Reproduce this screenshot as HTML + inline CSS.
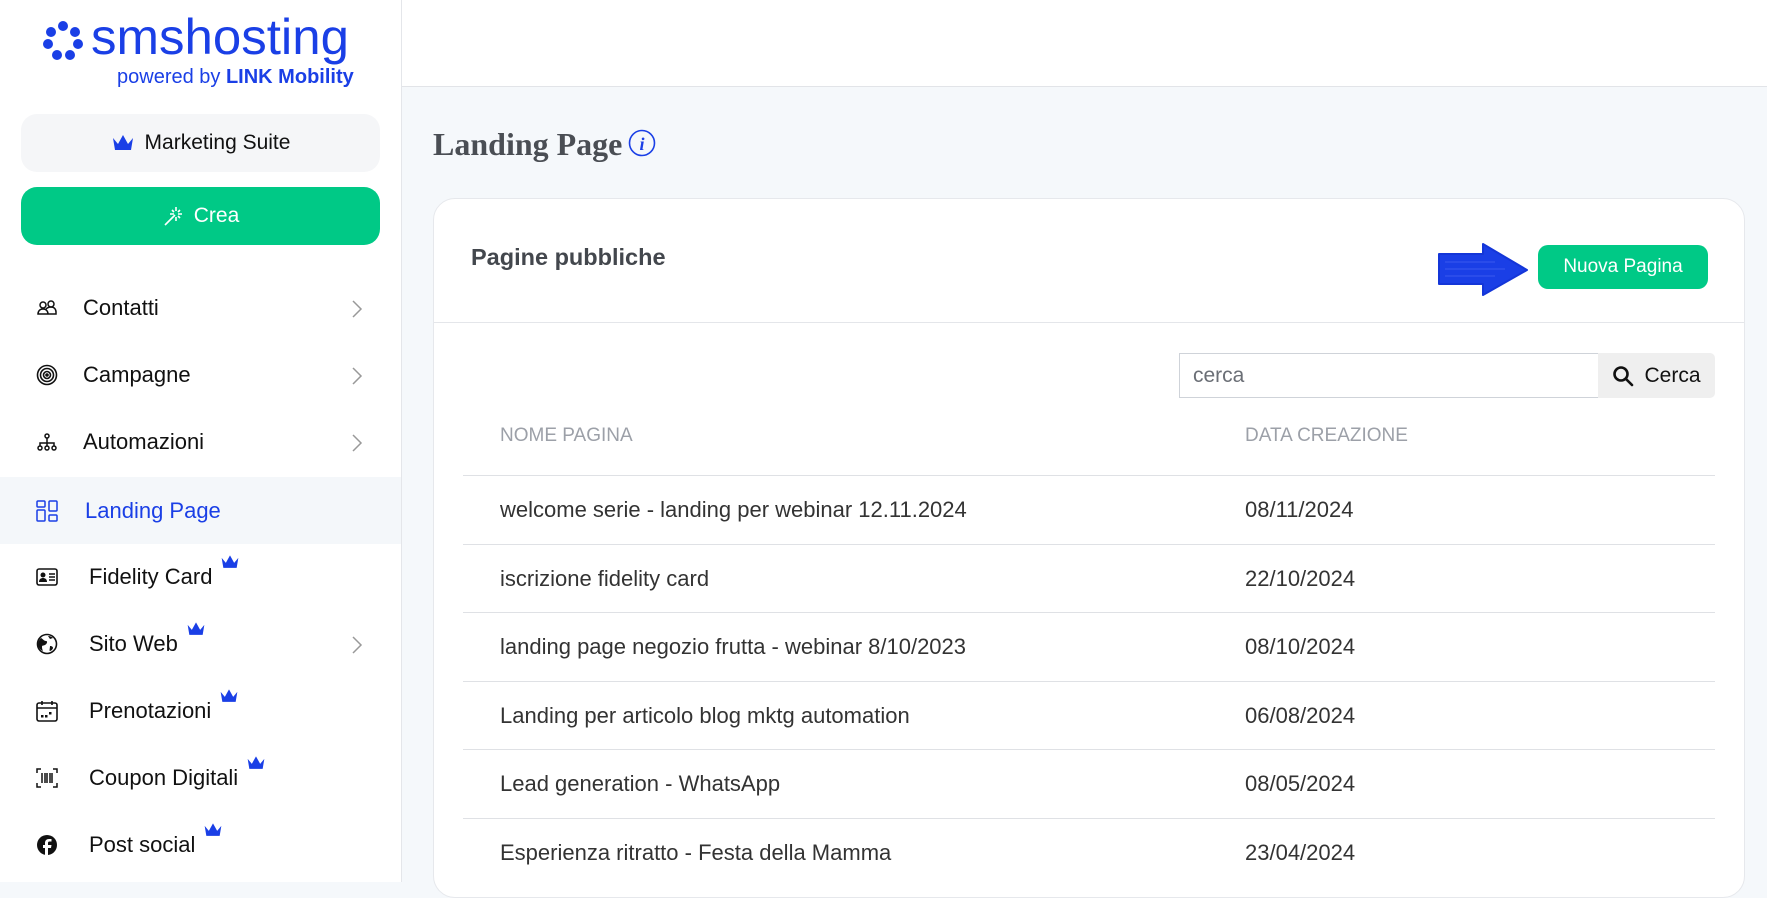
<!DOCTYPE html>
<html><head><meta charset="utf-8"><style>
*{box-sizing:border-box;margin:0;padding:0}
body{width:1767px;height:882px;overflow:hidden;background:#f5f8fb;font-family:"Liberation Sans",Arial,sans-serif;position:relative}
.side{position:absolute;left:0;top:0;width:402px;height:882px;background:#fff;border-right:1px solid #e4e6ea}
.top{position:absolute;left:402px;top:0;right:0;height:87px;background:#fff;border-bottom:1px solid #e2e4e8}
.abs{position:absolute}
.logo{left:91px;top:8px;font-size:50px;color:#1a3fe6;transform:scaleX(1.02);transform-origin:left}
.pow{left:117px;top:66px;font-size:20px;color:#1a3fe6}
.ms{left:21px;top:114px;width:359px;height:58px;background:#f5f6f8;border-radius:16px;font-size:21px;color:#111;display:flex;align-items:center;justify-content:center;gap:10px}
.crea{left:21px;top:187px;width:359px;height:58px;background:#00c986;border-radius:16px;font-size:21px;color:#fff;display:flex;align-items:center;justify-content:center;gap:10px}
.item{position:absolute;left:0;width:401px;height:66px;display:flex;align-items:center;font-size:22px;color:#111}
.item .ic{position:absolute;left:36px;top:22px;width:22px;height:22px}
.item .t{position:absolute;left:83px}
.item .t2{position:absolute;left:89px}
.chev{position:absolute;left:350px;top:24px}
.crown{display:inline-block;vertical-align:top;margin-left:8px;margin-top:-10px}
.card{left:433px;top:198px;width:1312px;height:700px;background:#fff;border:1px solid #e6e8ec;border-radius:22px}
.row{position:absolute;left:463px;width:1252px;height:68px;border-top:1px solid #dfe1e5;font-size:22px;color:#333;display:flex;align-items:center}
.row span{position:absolute}
</style></head><body>
<div class="side">
<svg class="abs" style="left:40px;top:18px" width="50" height="45" viewBox="40 18 50 45">
<g fill="#1a3fe6"><circle cx="63" cy="26" r="5"/><circle cx="75" cy="32" r="5"/><circle cx="78" cy="44" r="5"/><circle cx="70" cy="55" r="5"/><circle cx="57" cy="55" r="5"/><circle cx="48" cy="44" r="5"/><circle cx="51" cy="32" r="5"/></g></svg>
<div class="abs logo">smshosting</div>
<div class="abs pow">powered by <b>LINK Mobility</b></div>
<div class="abs ms"><svg width="24" height="18" viewBox="0 0 24 18"><path d="M2 4l5 6 5-9 5 9 5-6-2 12H4z" fill="#1a3fe6"/></svg>Marketing Suite</div>
<div class="abs crea"><svg width="22" height="22" viewBox="0 0 22 22" stroke="#fff" stroke-width="1.6" fill="none"><path d="M3 20L13 10M14 2v4M14 12v4M8 9h4M16 9h4M10 5l2 2M18 13l-2-2M18 5l-2 2"/></svg>Crea</div>

<div class="item" style="top:275px"><svg class="ic" viewBox="0 0 22 22" fill="none" stroke="#111" stroke-width="1.5"><circle cx="7" cy="8" r="3"/><circle cx="15" cy="7" r="3"/><path d="M2 17c0-3 2-5 5-5s5 2 5 5zM10 12c1-1 3-2 5-2 3 0 5 2 5 5v2h-8"/></svg><span class="t">Contatti</span><svg class="chev" width="14" height="20" viewBox="0 0 14 20"><path d="M3 2l8 8-8 8" stroke="#999" stroke-width="1.5" fill="none"/></svg></div>
<div class="item" style="top:342px"><svg class="ic" viewBox="0 0 22 22" fill="none" stroke="#111" stroke-width="1.6"><circle cx="11" cy="11" r="9.5"/><circle cx="11" cy="11" r="6.5"/><circle cx="11" cy="11" r="3.5"/><circle cx="11" cy="11" r="1" fill="#111"/></svg><span class="t">Campagne</span><svg class="chev" width="14" height="20" viewBox="0 0 14 20"><path d="M3 2l8 8-8 8" stroke="#999" stroke-width="1.5" fill="none"/></svg></div>
<div class="item" style="top:409px"><svg class="ic" viewBox="0 0 22 22" fill="none" stroke="#111" stroke-width="1.5"><circle cx="11" cy="5" r="2"/><path d="M11 7v4M4 15v-3h14v3M11 11v4"/><circle cx="4" cy="17" r="2"/><circle cx="11" cy="17" r="2"/><circle cx="18" cy="17" r="2"/></svg><span class="t">Automazioni</span><svg class="chev" width="14" height="20" viewBox="0 0 14 20"><path d="M3 2l8 8-8 8" stroke="#999" stroke-width="1.5" fill="none"/></svg></div>
<div class="item" style="top:477px;height:67px;background:#f4f7fa;color:#1a3fe6"><svg class="ic" style="top:23px" viewBox="0 0 22 22" fill="none" stroke="#1a3fe6" stroke-width="1.5"><rect x="1" y="1" width="8" height="6" rx="1"/><rect x="13" y="1" width="8" height="10" rx="1"/><rect x="1" y="10" width="8" height="11" rx="1"/><rect x="13" y="15" width="8" height="6" rx="1"/></svg><span class="t" style="left:85px">Landing Page</span></div>
<div class="item" style="top:544px"><svg class="ic" viewBox="0 0 22 22"><rect x="1" y="3" width="20" height="16" rx="2" fill="none" stroke="#111" stroke-width="1.6"/><circle cx="7" cy="9" r="2.5" fill="#111"/><path d="M3 16c0-3 2-4 4-4s4 1 4 4z" fill="#111"/><path d="M13 8h6M13 11h6M13 14h6" stroke="#111" stroke-width="1.5"/></svg><span class="t2">Fidelity Card<svg class="crown" width="20" height="16" viewBox="0 0 24 18"><path d="M2 4l5 6 5-9 5 9 5-6-2 12H4z" fill="#1a3fe6"/></svg></span></div>
<div class="item" style="top:611px"><svg class="ic" viewBox="0 0 22 22"><circle cx="11" cy="11" r="9.5" fill="none" stroke="#111" stroke-width="1.6"/><path d="M5 5c2 1 3 3 5 3s1 3-1 4-3 0-3 2 1 4 1 4c-3-1-5-4-5-7 0-2 1-4 3-6zM14 13c2 0 3 1 3 2s-2 3-3 3 0-3 0-5zM12 3c2 0 4 1 5 2l-3 1z" fill="#111"/></svg><span class="t2">Sito Web<svg class="crown" width="20" height="16" viewBox="0 0 24 18"><path d="M2 4l5 6 5-9 5 9 5-6-2 12H4z" fill="#1a3fe6"/></svg></span><svg class="chev" width="14" height="20" viewBox="0 0 14 20"><path d="M3 2l8 8-8 8" stroke="#999" stroke-width="1.5" fill="none"/></svg></div>
<div class="item" style="top:678px"><svg class="ic" viewBox="0 0 22 22" fill="none" stroke="#111" stroke-width="1.6"><rect x="1" y="3" width="20" height="18" rx="2"/><path d="M1 8h20M6 1v4M16 1v4"/><g fill="#111" stroke="none"><rect x="5" y="15" width="2.5" height="2.5"/><rect x="9" y="15" width="2.5" height="2.5"/><rect x="13" y="12" width="2.5" height="2.5"/></g></svg><span class="t2">Prenotazioni<svg class="crown" width="20" height="16" viewBox="0 0 24 18"><path d="M2 4l5 6 5-9 5 9 5-6-2 12H4z" fill="#1a3fe6"/></svg></span></div>
<div class="item" style="top:745px"><svg class="ic" viewBox="0 0 22 22" fill="none" stroke="#111" stroke-width="1.5"><path d="M1 6V2h4M17 2h4v4M21 16v4h-4M5 20H1v-4M6 6v10M9 6v10M11 6v10M14 6v10M16 6v10"/></svg><span class="t2">Coupon Digitali<svg class="crown" width="20" height="16" viewBox="0 0 24 18"><path d="M2 4l5 6 5-9 5 9 5-6-2 12H4z" fill="#1a3fe6"/></svg></span></div>
<div class="item" style="top:812px"><svg class="ic" viewBox="0 0 22 22"><circle cx="11" cy="11" r="10" fill="#111"/><path d="M12 21v-7h3l.5-3H12V9c0-1 .5-1.5 1.5-1.5H15.5V5H13c-2.5 0-4 1.5-4 4v2H7v3h2v7z" fill="#fff"/></svg><span class="t2">Post social<svg class="crown" width="20" height="16" viewBox="0 0 24 18"><path d="M2 4l5 6 5-9 5 9 5-6-2 12H4z" fill="#1a3fe6"/></svg></span></div>
</div>
<div class="top"></div>

<div class="abs" style="left:433px;top:126px;font-family:'Liberation Serif',serif;font-weight:bold;font-size:32px;color:#4a4e54">Landing Page</div>
<svg class="abs" style="left:628px;top:129px" width="28" height="28" viewBox="0 0 28 28"><circle cx="14" cy="14" r="12.5" fill="none" stroke="#1a3fe6" stroke-width="1.6"/><text x="14" y="21" text-anchor="middle" font-family="Liberation Serif" font-style="italic" font-weight="bold" font-size="18" fill="#1a3fe6">i</text></svg>

<div class="abs card">
<div class="abs" style="left:0;top:123px;width:1310px;border-top:1px solid #e4e6ea"></div>
</div>
<div class="abs" style="left:471px;top:244px;font-size:23.5px;font-weight:bold;color:#43474d">Pagine pubbliche</div>
<svg class="abs" style="left:1437px;top:242px" width="92" height="54" viewBox="0 0 92 54"><path d="M2 12h44V2l44 26-44 25V42H2z" fill="#1a3fe6" stroke="#1436d8" stroke-width="2" stroke-linejoin="round"/><path d="M8 20h50M8 27h60M8 34h50" stroke="#3d5cf0" stroke-width="1.5" opacity=".6"/></svg>
<div class="abs" style="left:1538px;top:245px;width:170px;height:44px;background:#00c986;border-radius:10px;color:#fff;font-size:19px;display:flex;align-items:center;justify-content:center">Nuova Pagina</div>

<div class="abs" style="left:1179px;top:353px;width:420px;height:45px;border:1px solid #cfd3d9;background:#fff;font-size:21px;color:#6b6f76;padding:10px 13px">cerca</div>
<div class="abs" style="left:1598px;top:353px;width:117px;height:45px;background:#efefef;border-radius:0 5px 5px 0;font-size:21px;color:#111;display:flex;align-items:center;justify-content:center;gap:10px"><svg width="22" height="22" viewBox="0 0 22 22" fill="none" stroke="#111" stroke-width="2.6"><circle cx="9" cy="9" r="6.5"/><path d="M14 14l6 6" stroke-linecap="round"/></svg>Cerca</div>

<div class="abs" style="left:500px;top:425px;font-size:19px;color:#9ca0a8">NOME PAGINA</div>
<div class="abs" style="left:1245px;top:425px;font-size:19px;color:#9ca0a8">DATA CREAZIONE</div>

<div class="row" style="top:475px"><span style="left:37px">welcome serie - landing per webinar 12.11.2024</span><span style="left:782px">08/11/2024</span></div>
<div class="row" style="top:544px"><span style="left:37px">iscrizione fidelity card</span><span style="left:782px">22/10/2024</span></div>
<div class="row" style="top:612px"><span style="left:37px">landing page negozio frutta - webinar 8/10/2023</span><span style="left:782px">08/10/2024</span></div>
<div class="row" style="top:681px"><span style="left:37px">Landing per articolo blog mktg automation</span><span style="left:782px">06/08/2024</span></div>
<div class="row" style="top:749px"><span style="left:37px">Lead generation - WhatsApp</span><span style="left:782px">08/05/2024</span></div>
<div class="row" style="top:818px"><span style="left:37px">Esperienza ritratto - Festa della Mamma</span><span style="left:782px">23/04/2024</span></div>
</body></html>
